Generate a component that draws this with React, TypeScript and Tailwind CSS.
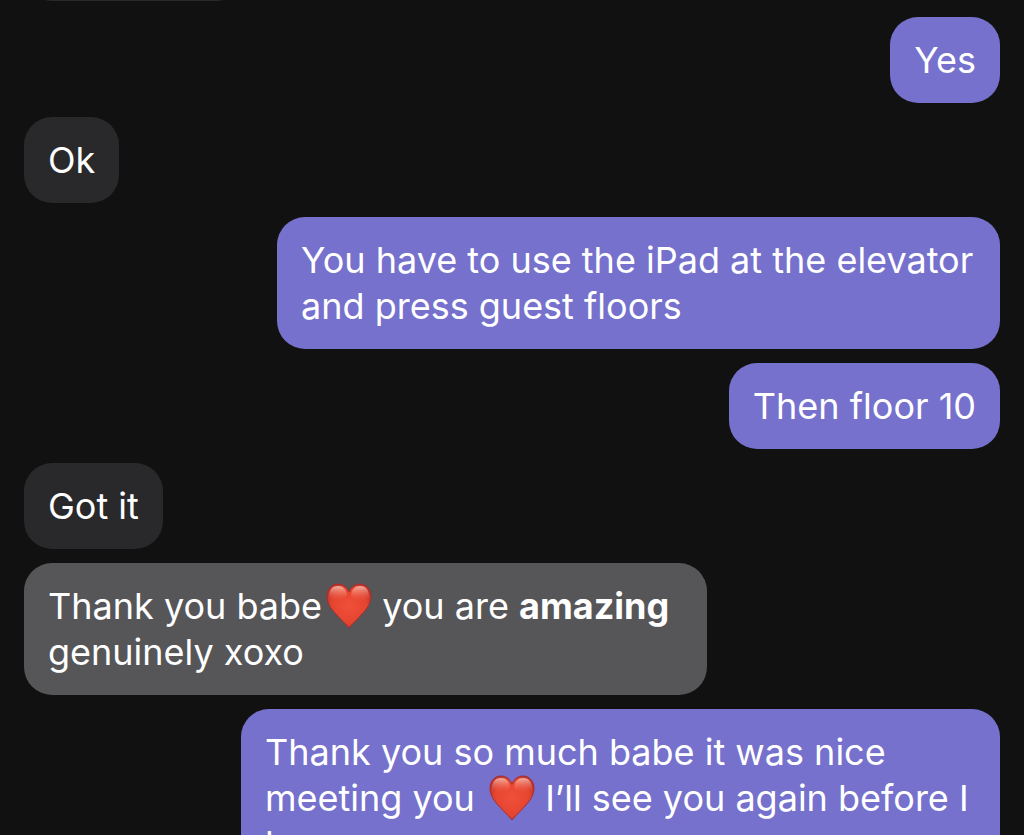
import type { ReactNode } from "react";

function Heart() {
  return (
    <svg role="img" aria-label="red heart" viewBox="0 0 46 46" className="ml-1 inline-block size-[46px] align-top">
      <defs>
        <radialGradient id="heart-body" cx="0.5" cy="0.5" r="0.6">
          <stop offset="0" stopColor="#f0503b" />
          <stop offset="0.65" stopColor="#e5452f" />
          <stop offset="1" stopColor="#b92f28" />
        </radialGradient>
        <linearGradient id="heart-shine" x1="0" y1="0" x2="0" y2="1">
          <stop offset="0" stopColor="#ffd0c2" stopOpacity="0.8" />
          <stop offset="1" stopColor="#f26a55" stopOpacity="0" />
        </linearGradient>
      </defs>
      <path d="M23 45C20 41 15 37 10 31C5 26 1 20 1 13C1 6 6 1 12 1C17 1 21 4 23 9C25 4 29 1 34 1C40 1 45 6 45 13C45 20 41 26 36 31C31 37 26 41 23 45Z" fill="url(#heart-body)" stroke="#a12e31" strokeWidth="1" />
      <path d="M3 14C3 6 7 3 12 3C17 3 20 6 21 12C18 18 6 19 3 14Z" fill="url(#heart-shine)" />
      <path d="M25 12C26 6 29 3 34 3C39 3 43 6 43 14C40 19 28 18 25 12Z" fill="url(#heart-shine)" />
    </svg>
  );
}

const tones = {
  sent: "self-end bg-[#7671cc]",
  received: "self-start bg-[#29292b]",
  highlighted: "self-start bg-[#565658]",
};

function Bubble({ tone, className = "", children }: { tone: keyof typeof tones; className?: string; children?: ReactNode }) {
  return (
    <li className={`max-w-full min-h-[86px] rounded-[28px] px-6 py-5 ${tones[tone]} ${className}`}>{children}</li>
  );
}

export default function App() {
  return (
    <main className="h-screen overflow-hidden bg-[#111111] font-['Inter','Liberation_Sans',sans-serif] text-[36px] font-normal leading-[46px] text-white">
      <ul className="-mt-[85px] flex flex-col gap-3.5 px-6">
        <Bubble tone="received" className="mb-0.5 w-[220px]" />
        <Bubble tone="sent">Yes</Bubble>
        <Bubble tone="received">Ok</Bubble>
        <Bubble tone="sent" className="w-[723px]">
          You have to use the iPad at the elevator
          <br />
          and press guest floors
        </Bubble>
        <Bubble tone="sent">Then floor 10</Bubble>
        <Bubble tone="received">Got it</Bubble>
        <Bubble tone="highlighted" className="w-[683px]">
          Thank you babe
          <Heart /> you are <strong className="font-bold">amazing</strong>
          <br />
          genuinely xoxo
        </Bubble>
        <Bubble tone="sent" className="w-[759px]">
          Thank you so much babe it was nice
          <br />
          meeting you <Heart /> I’ll see you again before I
          <br />
          leave xoxo
        </Bubble>
      </ul>
    </main>
  );
}
